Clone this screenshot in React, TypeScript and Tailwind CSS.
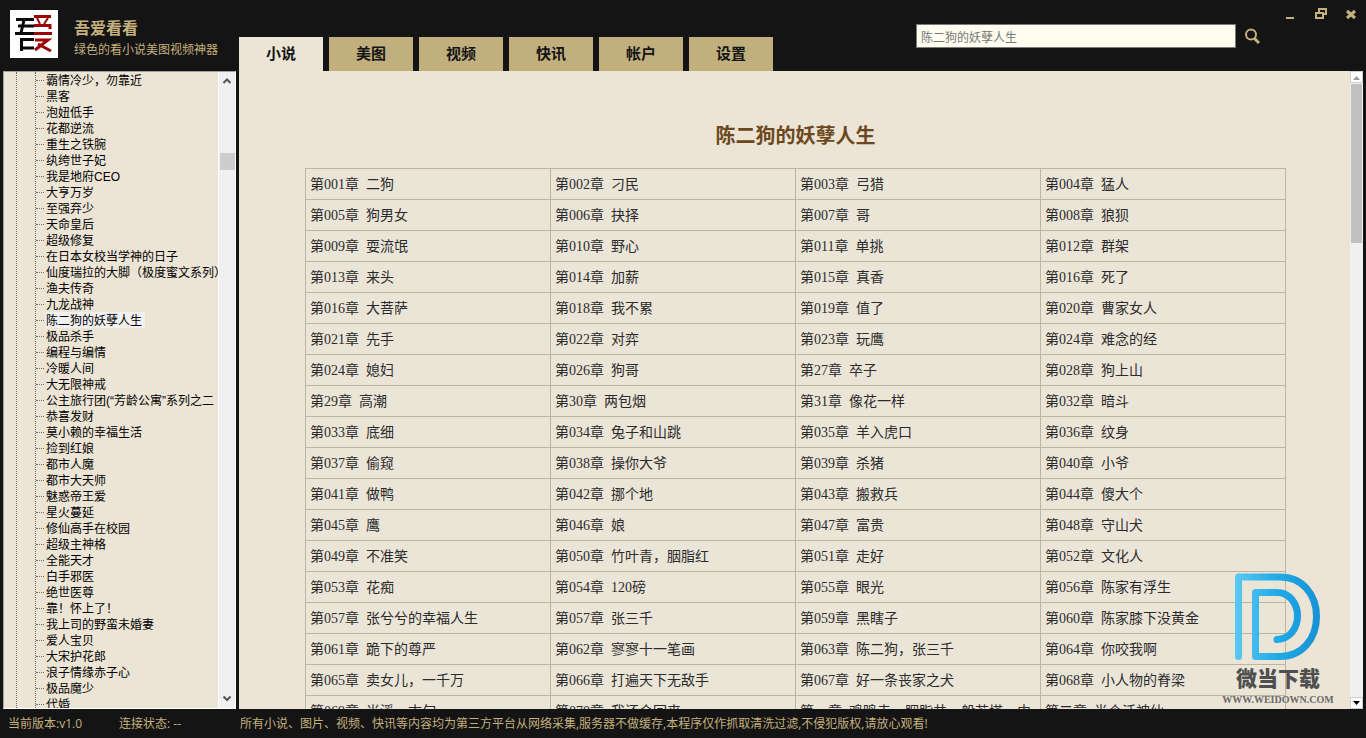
import React, { useState } from "react";

const tabs = ["小说", "美图", "视频", "快讯", "帐户", "设置"];

const books = [
  "霸情冷少，勿靠近",
  "黑客",
  "泡妞低手",
  "花都逆流",
  "重生之铁腕",
  "纨绔世子妃",
  "我是地府CEO",
  "大亨万岁",
  "至强弃少",
  "天命皇后",
  "超级修复",
  "在日本女校当学神的日子",
  "仙度瑞拉的大脚（极度蜜文系列）",
  "渔夫传奇",
  "九龙战神",
  "陈二狗的妖孽人生",
  "极品杀手",
  "编程与编情",
  "冷暖人间",
  "大无限神戒",
  "公主旅行团(“芳龄公寓”系列之二",
  "恭喜发财",
  "莫小赖的幸福生活",
  "捡到红娘",
  "都市人魔",
  "都市大天师",
  "魅惑帝王爱",
  "星火蔓延",
  "修仙高手在校园",
  "超级主神格",
  "全能天才",
  "白手邪医",
  "绝世医尊",
  "靠！怀上了！",
  "我上司的野蛮未婚妻",
  "爱人宝贝",
  "大宋护花郎",
  "浪子情缘赤子心",
  "极品魔少",
  "代婚",
];

const chapters = [
  ["第001章  二狗", "第002章  刁民", "第003章  弓猎", "第004章  猛人"],
  ["第005章  狗男女", "第006章  抉择", "第007章  哥", "第008章  狼狈"],
  ["第009章  耍流氓", "第010章  野心", "第011章  单挑", "第012章  群架"],
  ["第013章  来头", "第014章  加薪", "第015章  真香", "第016章  死了"],
  ["第016章  大菩萨", "第018章  我不累", "第019章  值了", "第020章  曹家女人"],
  ["第021章  先手", "第022章  对弈", "第023章  玩鹰", "第024章  难念的经"],
  ["第024章  媳妇", "第026章  狗哥", "第27章  卒子", "第028章  狗上山"],
  ["第29章  高潮", "第30章  两包烟", "第31章  像花一样", "第032章  暗斗"],
  ["第033章  底细", "第034章  兔子和山跳", "第035章  羊入虎口", "第036章  纹身"],
  ["第037章  偷窥", "第038章  操你大爷", "第039章  杀猪", "第040章  小爷"],
  ["第041章  做鸭", "第042章  挪个地", "第043章  搬救兵", "第044章  傻大个"],
  ["第045章  鹰", "第046章  娘", "第047章  富贵", "第048章  守山犬"],
  ["第049章  不准笑", "第050章  竹叶青，胭脂红", "第051章  走好", "第052章  文化人"],
  ["第053章  花痴", "第054章  120磅", "第055章  眼光", "第056章  陈家有浮生"],
  ["第057章  张兮兮的幸福人生", "第057章  张三千", "第059章  黑瞎子", "第060章  陈家膝下没黄金"],
  ["第061章  跪下的尊严", "第062章  寥寥十一笔画", "第063章  陈二狗，张三千", "第064章  你咬我啊"],
  ["第065章  卖女儿，一千万", "第066章  打遍天下无敌手", "第067章  好一条丧家之犬", "第068章  小人物的脊梁"],
  ["第069章  尚溪，古旬", "第070章  我还会回来", "第一章  鸡鸣寺，胭脂井，般若塔，由", "第二章  半个活神仙"],
];

function Logo() {
  return (
    <svg className="size-12 shrink-0 bg-white" viewBox="0 0 48 48" fill="none" aria-hidden="true">
      <g stroke="#0b0b0b" strokeWidth="3">
        <path d="M6 9.500H24" />
        <path d="M14 10L11 23" />
        <path d="M8 16H24" />
        <path d="M5 23.500H24" />
        <path d="M11.500 41V29.500H24" />
        <path d="M11 38H24" />
      </g>
      <g stroke="#9b0707" strokeWidth="3">
        <path d="M24 6.500H41" />
        <path d="M27 8L30 14M38 8L34 14" strokeWidth="2" />
        <path d="M24 15.500H40V19" />
        <path d="M24 23.500H42" />
        <path d="M25 30H38L25 40" />
        <path d="M28 34L41 41" />
      </g>
    </svg>
  );
}

function WindowButtons() {
  return (
    <div className="flex items-start gap-4 text-[#c4b17d]">
      <button aria-label="最小化" className="size-4">
        <svg viewBox="0 0 16 16" fill="currentColor">
          <path d="M4 9h8v2H4z" />
        </svg>
      </button>
      <button aria-label="还原" className="size-4">
        <svg viewBox="0 0 16 16" fill="none" stroke="currentColor" strokeWidth="2">
          <path d="M2 5h7v5H2zM5 4V1h7v5H9" />
        </svg>
      </button>
      <button aria-label="关闭" className="size-4">
        <svg viewBox="0 0 16 16" fill="none" stroke="currentColor" strokeWidth="3">
          <path d="M1 3l8 7M9 3l-8 7" />
        </svg>
      </button>
    </div>
  );
}

function SearchBox() {
  const [keyword, setKeyword] = useState("陈二狗的妖孽人生");

  return (
    <div className="mt-6 flex items-center gap-2 self-start">
      <input
        aria-label="搜索小说"
        className="h-6 w-80 border border-[#7a7a7a] bg-[#fffcf0] px-1 text-xs text-[#777777] outline-none"
        value={keyword}
        onChange={(e) => setKeyword(e.target.value)}
      />
      <button aria-label="搜索" className="size-4 text-[#c4b17d]">
        <svg viewBox="0 0 16 16" fill="none" stroke="currentColor" strokeWidth="2">
          <circle cx="7" cy="6.500" r="5" />
          <path d="M10.500 10.500l4.500 4.500" strokeWidth="3" />
        </svg>
      </button>
    </div>
  );
}

function Sidebar() {
  const [selected, setSelected] = useState("陈二狗的妖孽人生");

  return (
    <aside className="flex w-[233px] shrink-0 overflow-hidden border border-t-[#a0a0a0] border-r-white border-b-white border-l-[#a0a0a0] bg-[#ece4d4]">
      <div className="min-w-0 flex-1 overflow-hidden pl-3">
        <div className="border-l border-dotted border-[#6e6e6e] pl-[18px]">
          <ul className="border-l border-dotted border-[#6e6e6e]">
            {books.map((book) => (
              <li key={book} className="flex h-4 items-center">
                <span className="mr-px w-2 shrink-0 border-t border-dotted border-[#6e6e6e]" />
                <button
                  className={
                    "h-4 pr-[3px] pl-px text-xs leading-[18px] whitespace-nowrap text-black " +
                    (book === selected ? "bg-[#f0f0f0]" : "")
                  }
                  onClick={() => setSelected(book)}
                >
                  {book}
                </button>
              </li>
            ))}
          </ul>
        </div>
      </div>
      <div className="flex w-[17px] shrink-0 flex-col items-center justify-between border-l border-white bg-[#f0f0f0]">
        <svg className="mt-1 h-3 w-3" viewBox="0 0 12 12" fill="none" stroke="#555555" strokeWidth="2">
          <path d="M2.500 7l3.500-3.500 3.500 3.500" />
        </svg>
        <div className="mt-[65px] mb-auto h-[17px] w-[15px] bg-[#cdcdcd]" />
        <svg className="mb-1 h-3 w-3" viewBox="0 0 12 12" fill="none" stroke="#555555" strokeWidth="2">
          <path d="M2.500 4.500l3.500 3.500 3.500-3.500" />
        </svg>
      </div>
    </aside>
  );
}

function Watermark() {
  return (
    <div className="pointer-events-none absolute right-[30px] bottom-0 flex w-[110px] flex-col items-center">
      <svg className="mb-[3px] h-[88px] w-[86px]" viewBox="0 0 86 88" fill="none">
        <defs>
          <linearGradient id="wd" x1="0" y1="0" x2="86" y2="0" gradientUnits="userSpaceOnUse">
            <stop offset="0" stopColor="#5cc8f2" />
            <stop offset="0.5" stopColor="#1faae6" />
            <stop offset="1" stopColor="#1890d4" />
          </linearGradient>
        </defs>
        <path
          d="M3.500 83.500V4H45C67 4 81.500 21 81.500 43.500S67 83.500 45 83.500H20.500V19.500H42C54 19.500 62.500 30 62.500 43S54 66 42 66.500"
          stroke="url(#wd)"
          strokeWidth="7"
          strokeLinecap="round"
          strokeLinejoin="round"
        />
      </svg>
      <span className="text-[21px] leading-[30px] font-black text-[#505050]">微当下载</span>
      <span className="pb-[3px] font-['Liberation_Serif',serif] text-[10px] leading-3 font-bold text-[#6a6a6a]">
        WWW.WEIDOWN.COM
      </span>
    </div>
  );
}

function Reader() {
  return (
    <main className="relative flex min-w-0 flex-1 bg-[#ece4d4]">
      <div className="min-w-0 flex-1 overflow-hidden pt-[49px] pr-16 pl-[66px]">
        <h1 className="text-center text-xl leading-8 font-bold text-[#6b4820]">陈二狗的妖孽人生</h1>
        <table className="mt-4 w-full table-fixed border-collapse bg-[#ebe5d8] font-['Liberation_Serif','Noto_Sans_CJK_SC',serif] text-sm text-[#2b2b2b]">
          <tbody>
            {chapters.map((row) => (
              <tr key={row[0]} className="h-[31px]">
                {row.map((chapter) => (
                  <td key={chapter} className="border border-[#bdb5a3] px-1 pt-[2px] pb-0 leading-7">
                    <a href="#" className="whitespace-pre-wrap">
                      {chapter}
                    </a>
                  </td>
                ))}
              </tr>
            ))}
          </tbody>
        </table>
      </div>
      <div className="flex w-[13px] shrink-0 flex-col bg-[#f0f0f0]">
        <svg className="h-3 w-full border border-[#d0d0d0] bg-white" viewBox="0 0 11 10">
          <path d="M2 8h7L5.500 4z" fill="#9a9a9a" />
        </svg>
        <div className="mx-px mt-px h-[159px] bg-[#c1c1c1]" />
        <svg className="mt-auto h-3 w-full border border-[#d0d0d0] bg-white" viewBox="0 0 11 10">
          <path d="M2 3h7L5.500 7z" fill="#000000" />
        </svg>
      </div>
      <Watermark />
    </main>
  );
}

function App() {
  const [activeTab, setActiveTab] = useState("小说");

  return (
    <div className="flex h-screen flex-col overflow-hidden bg-[#141414] font-['Liberation_Sans','Noto_Sans_CJK_SC',sans-serif]">
      <header className="flex h-[71px] shrink-0">
        <div className="flex w-[239px] shrink-0 gap-4 pt-[10px] pl-[10px] text-[#c4b17d]">
          <Logo />
          <div className="pt-[9px] whitespace-nowrap">
            <p className="text-base leading-5 font-bold">吾爱看看</p>
            <p className="text-xs leading-[22px]">绿色的看小说美图视频神器</p>
          </div>
        </div>
        <nav className="flex items-end gap-[6px]">
          {tabs.map((tab) => (
            <button
              key={tab}
              className={
                "h-[34px] w-[84px] text-[15px] font-bold text-[#141414] " +
                (tab === activeTab ? "bg-[#ece4d4]" : "bg-[#c1b07d]")
              }
              onClick={() => setActiveTab(tab)}
            >
              {tab}
            </button>
          ))}
        </nav>
        <div className="ml-auto flex gap-[22px] pr-1">
          <SearchBox />
          <div className="pt-2">
            <WindowButtons />
          </div>
        </div>
      </header>
      <div className="flex min-h-0 flex-1 gap-[3px] px-[3px]">
        <Sidebar />
        <Reader />
      </div>
      <footer className="flex h-[29px] shrink-0 items-center px-2 font-['Open_Sans','Noto_Sans_CJK_SC',sans-serif] text-xs whitespace-nowrap text-[#c4b17d]">
        <span className="w-[111px]">当前版本:v1.0</span>
        <span className="w-[121px]">连接状态: --</span>
        <span>
          所有小说、图片、视频、快讯等内容均为第三方平台从网络采集,服务器不做缓存,本程序仅作抓取清洗过滤,不侵犯版权,请放心观看!
        </span>
      </footer>
    </div>
  );
}

export default App;
